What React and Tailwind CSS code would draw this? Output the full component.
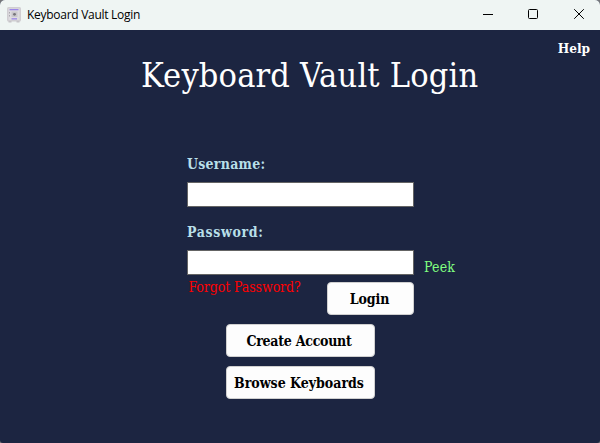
function VaultIcon() {
  return (
    <svg width="14" height="16" viewBox="0 0 14 16" className="shrink-0">
      <rect x="0" y="0" width="14" height="14.5" rx="1.5" fill="#d0ced2" />
      <rect x="1.5" y="14" width="3" height="1.5" fill="#c6c4c8" />
      <rect x="9.5" y="14" width="3" height="1.5" fill="#c6c4c8" />
      <rect x="1.5" y="1.5" width="11" height="11.5" fill="#dedce0" />
      <rect x="2.5" y="2" width="9" height="1.3" fill="#9a86e8" />
      <rect x="4.5" y="11.2" width="5.5" height="1.3" fill="#9a86e8" />
      <rect x="4.5" y="4.5" width="6" height="5.5" fill="#cac8cc" />
      <circle cx="7.5" cy="7.3" r="1.4" fill="#77757b" />
      <path d="M2.5 5v1.5M2.5 8v1.5" stroke="#aaa8ae" />
    </svg>
  );
}

function TitleBar() {
  return (
    <header className="flex h-[30px] items-center bg-[#eff5f3] pl-[7px] font-['Open_Sans',sans-serif] text-xs text-black">
      <VaultIcon />
      <span className="ml-[6px] whitespace-nowrap tracking-[-0.28px]">Keyboard Vault Login</span>
      <svg className="ml-auto" width="120" height="30" viewBox="0 0 120 30" fill="none" stroke="#000">
        <path d="M3 14.5h10" />
        <rect x="48.5" y="9.5" width="9" height="9" rx="1" />
        <path d="M94.2 9.2l9.6 9.6M103.8 9.2l-9.6 9.6" />
      </svg>
    </header>
  );
}

function Field({ label, type, labelClass }) {
  return (
    <label className="block h-[68px] w-[227px]">
      <span className={"block h-[28px] whitespace-nowrap text-[14px] leading-[20px] font-bold text-[#b8dfe8] " + labelClass}>{label}</span>
      <input type={type} className="block h-[25px] w-[227px] border border-[#646464] bg-white px-1 text-black outline-none" />
    </label>
  );
}

function Button({ children, className }) {
  return (
    <button type="button" className={"h-[33px] shrink-0 rounded-[4px] border border-[#d0d0d0] bg-[#fdfdfd] whitespace-nowrap text-[14px] leading-[20px] font-bold text-black " + className}>
      {children}
    </button>
  );
}

export default function App() {
  return (
    <div className="h-[443px] w-[600px] overflow-hidden bg-[#75777a]">
      <div className="flex h-full flex-col overflow-hidden rounded-t-[5px] rounded-b-[3px] bg-[#1c2541]">
        <TitleBar />
        <main className="flex flex-col font-['DejaVu_Serif_Condensed','DejaVu_Serif',serif] font-[stretch:condensed]">
          <a className="mr-[10px] h-[22px] self-end pt-[8px] text-[13.5px] leading-[20px] font-bold text-white">Help</a>
          <h1 className="ml-[141px] h-[102px] whitespace-nowrap text-[34px] leading-[46px] tracking-[0.17px] text-white">Keyboard Vault Login</h1>
          <form className="ml-[187px] flex w-[280px] flex-col">
            <Field label="Username:" type="text" labelClass="tracking-[0.25px]" />
            <div className="flex h-[60px]">
              <Field label="Password:" type="password" labelClass="tracking-[0.65px]" />
              <a className="mt-[35px] ml-[10px] h-5 text-[14px] leading-[20px] tracking-[0.2px] text-[#80ff80]">Peek</a>
            </div>
            <div className="flex h-[42px] w-[227px] justify-between">
              <a className="-mt-[5px] ml-[1.5px] h-5 whitespace-nowrap text-[14px] leading-[20px] tracking-[-0.1px] text-[#ff0000]">Forgot Password?</a>
              <Button className="w-[87px] pr-[2px] tracking-[-0.1px]">Login</Button>
            </div>
          </form>
          <div className="flex flex-col items-center gap-[9px]">
            <Button className="w-[149px] pr-[2px] tracking-[-0.25px]">Create Account</Button>
            <Button className="w-[149px] pr-[2px]">Browse Keyboards</Button>
          </div>
        </main>
      </div>
    </div>
  );
}
